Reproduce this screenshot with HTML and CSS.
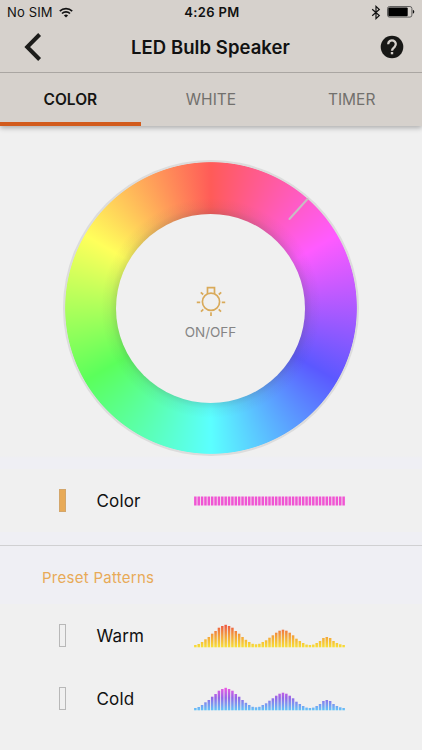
FILE: index.html
```html
<!DOCTYPE html>
<html lang="en">
<head>
<meta charset="utf-8">
<title>LED Bulb Speaker</title>
<link rel="stylesheet" href="styles.css">
</head>
<body>
<div class="top">
  <div class="status">
    <div class="carrier"><span>No SIM</span>
      <svg width="14" height="11" viewBox="0 0 14 11"><path d="M.8 4.1a9 9 0 0 1 12.4 0M3 6.5a5.8 5.8 0 0 1 8 0" fill="none" stroke="#111" stroke-width="1.7"/><path d="M7 10.6 4.9 8.4a3.1 3.1 0 0 1 4.2 0Z" fill="#111"/></svg>
    </div>
    <div class="clock">4:26 PM</div>
    <div class="power">
      <svg width="10" height="15" viewBox="0 0 10 15"><path d="M1.2 4.2 8.3 10.5 5 13.6V1.4L8.3 4.5 1.2 10.8" fill="none" stroke="#111" stroke-width="1.2"/></svg>
      <svg width="28" height="12" viewBox="0 0 28 12"><rect x=".5" y=".5" width="24.4" height="10.6" rx="2" fill="none" stroke="#444" stroke-width=".8"/><rect x="1.3" y="1.4" width="19.4" height="8.8" rx="1" fill="#000"/><path d="M25.8 3.8q1.5.4 1.5 2t-1.5 2Z" fill="#111"/></svg>
    </div>
  </div>
  <div class="nav">
    <svg class="back" width="18" height="28" viewBox="0 0 18 28"><path d="M15.6 1.5 3.2 14l12.4 12.5" fill="none" stroke="#1c1c1a" stroke-width="4"/></svg>
    <h1>LED Bulb Speaker</h1>
    <svg class="help" width="24" height="24" viewBox="0 0 24 24"><circle cx="12" cy="12" r="11.3" fill="#181816"/><path d="M8.2 9.2a3.8 3.8 0 1 1 6.5 2.6c-1.5 1.4-2.7 1.9-2.7 4" fill="none" stroke="#d6d1cc" stroke-width="2.3"/><path d="M10.8 17h2.4v2.3h-2.4z" fill="#d6d1cc"/></svg>
  </div>
  <div class="tabs">
    <div class="tab active"><span>COLOR</span></div>
    <div class="tab"><span>WHITE</span></div>
    <div class="tab"><span>TIMER</span></div>
  </div>
</div>
<div class="picker">
  <div class="wheel">
    <div class="marker"></div>
    <div class="hub">
      <svg width="30" height="30" viewBox="0 0 30 30" fill="none" stroke="#d9aa5a" stroke-width="1.7"><circle cx="15" cy="15.8" r="8.6"/><path d="M11.5 8V1.6h7V8M.8 16.3h3.4M25.8 16.3h3.4M15 26.2v3.7M4.8 6.3l2.4 2.2M25.2 6.3l-2.4 2.2M5 25.7l2.3-2.3M25 25.7l-2.3-2.3"/></svg>
      <span>ON/OFF</span>
    </div>
  </div>
</div>
<div class="row custom">
  <i class="level on"></i><span class="name">Color</span><svg class="bars" data-kind="flat" width="152" height="24"></svg>
</div>
<div class="section"><h2>Preset Patterns</h2></div>
<div class="row">
  <i class="level"></i><span class="name">Warm</span><svg class="bars" data-kind="warm" width="152" height="24"></svg>
</div>
<div class="row">
  <i class="level"></i><span class="name">Cold</span><svg class="bars" data-kind="cold" width="152" height="24"></svg>
</div>
<svg width="0" height="0"><defs>
  <linearGradient id="warm" gradientUnits="userSpaceOnUse" x1="0" y1="1" x2="0" y2="23"><stop offset="0" stop-color="#ee5743"/><stop offset=".5" stop-color="#f3a13a"/><stop offset="1" stop-color="#f8df35"/></linearGradient>
  <linearGradient id="cold" gradientUnits="userSpaceOnUse" x1="0" y1="1" x2="0" y2="23"><stop offset="0" stop-color="#ec57e3"/><stop offset=".45" stop-color="#9466e8"/><stop offset="1" stop-color="#63c3f8"/></linearGradient>
</defs></svg>
<script src="bars.js"></script>
</body>
</html>
```
FILE: styles.css
```css
* { box-sizing: border-box; }
body {
  margin: 0;
  width: 422px;
  height: 750px;
  overflow: hidden;
  background: #f0f0f0;
  font-family: Inter, "Liberation Sans", sans-serif;
  color: #111;
}
svg { display: block; flex: none; }
.top {
  position: relative;
  height: 126px;
  background: #d6d1cc;
  box-shadow: 0 2px 5px rgba(0, 0, 0, .28);
}
.status {
  height: 24px;
  padding: 0 7px;
  display: grid;
  grid-template-columns: 1fr auto 1fr;
  align-items: center;
  font-size: 13px;
}
.carrier { display: flex; align-items: center; gap: 6px; letter-spacing: .15px; }
.clock { font-weight: 600; letter-spacing: .35px; padding-left: 2px; }
.power { display: flex; align-items: center; justify-content: flex-end; gap: 6px; }
.nav {
  height: 49px;
  padding: 0 18px 2px 24px;
  display: flex;
  align-items: center;
  justify-content: space-between;
  border-bottom: 1px solid #aaa6a2;
}
h1 { margin: 0 1px 0 0; font-size: 18.5px; font-weight: 600; letter-spacing: .05px; }
.help { margin-top: -1px; }
.tabs { height: 53px; display: grid; grid-template-columns: repeat(3, 1fr); }
.tab {
  display: flex;
  align-items: center;
  justify-content: center;
  padding-top: 3px;
  border-bottom: 4px solid transparent;
  font-size: 15.5px;
  color: #72706d;
}
.active { border-color: #d25b1d; color: #151513; font-weight: 600; }
.picker { height: 343px; padding-top: 34px; background: linear-gradient(#f0f0f0 330px, #efeff4 332px); }
.wheel {
  position: relative;
  width: 296px;
  height: 296px;
  margin-left: 62.5px;
  padding: 53.5px;
  border-radius: 50%;
  background:
    radial-gradient(circle, rgba(80, 80, 80, .2) 94px, rgba(80, 80, 80, .06) 101px, transparent 110px 145.4px, #dcdcdc 146.2px),
    conic-gradient(#ff5b58, #ff5bff 60deg, #5b58ff 120deg, #5bffff 180deg, #5bff5b 240deg, #ffff5b 300deg, #ff5b58);
}
.hub {
  width: 189px;
  height: 189px;
  border-radius: 50%;
  background: #f0f0f0;
  display: flex;
  flex-direction: column;
  align-items: center;
  padding-top: 72.5px;
  gap: 8px;
  font-size: 13.5px;
  line-height: 16px;
  color: #858585;
}
.marker {
  position: absolute;
  left: 221px;
  top: 48px;
  width: 29px;
  height: 2px;
  border-radius: 1px;
  background: #c8bcc3;
  transform: rotate(-48deg);
}
.row {
  height: 63px;
  padding-left: 59px;
  display: flex;
  align-items: center;
}
.level { width: 7px; height: 23px; border: 1px solid #b8b8b8; }
.level.on { background: #e8aa57; border-color: #d3a66b; }
.name { width: 97px; margin-left: 30.5px; font-size: 17px; letter-spacing: .15px; }
.section {
  height: 72px;
  padding-top: 13px;
  background: #efeff4;
}
.section::before { content: ""; display: block; height: 1px; background: #d0d0d2; }
h2 { margin: 23px 0 0 42px; font-size: 15px; line-height: 18px; font-weight: 400; letter-spacing: .27px; color: #e8aa57; }
```
FILE: bars.js
```js
const heights = [2.3,3.3,5.3,8,10.3,13.6,16.3,19.6,21.3,22.5,21.3,19.6,16.3,13.6,10.3,7.5,5.3,3.5,3,3.5,5.3,7,9.6,12,14.6,16.6,17.6,16.6,14.6,12,8.6,6.3,4.3,2.7,2.3,2.7,4.3,6.3,9.3,10.3,9.3,6.3,4.3,3,2.3];
const NS = "http://www.w3.org/2000/svg";
for (const svg of document.querySelectorAll(".bars")) {
  const kind = svg.dataset.kind;
  heights.forEach((h, i) => {
    const bar = document.createElementNS(NS, "rect");
    const flat = kind === "flat";
    bar.setAttribute("x", (0.1 + i * 3.37).toFixed(2));
    bar.setAttribute("y", flat ? 7.5 : 23.3 - h);
    bar.setAttribute("width", 2.5);
    bar.setAttribute("height", flat ? 9 : h);
    bar.setAttribute("fill", flat ? "#f055d3" : `url(#${kind})`);
    svg.appendChild(bar);
  });
}
```
